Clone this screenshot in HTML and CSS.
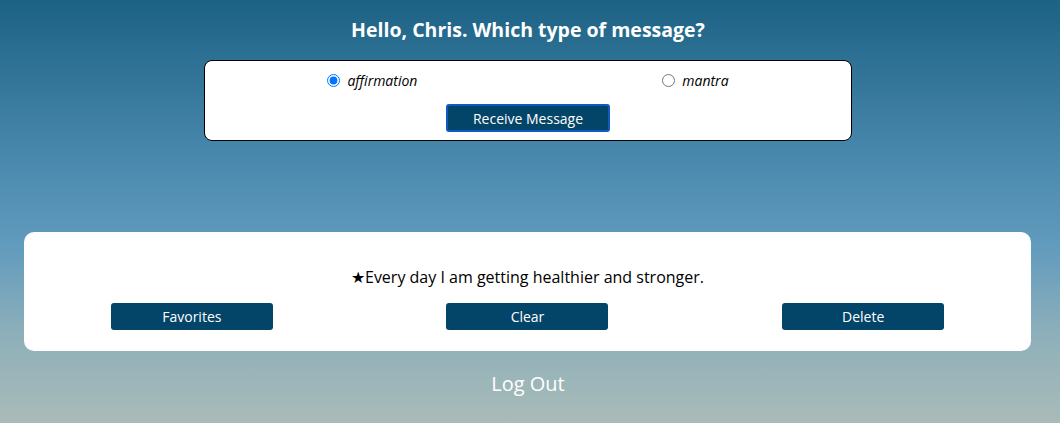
FILE: index.html
```html
<!DOCTYPE html>
<html lang="en">
<head>
<meta charset="utf-8">
<title>Messages</title>
<link rel="stylesheet" href="styles.css">
</head>
<body>
  <main class="page">
    <h2 class="greeting">Hello, Chris. Which type of message?</h2>
    <form class="choice-box">
      <div class="radio-row">
        <label class="radio-label"><input type="radio" name="type" checked> <span>affirmation</span></label>
        <label class="radio-label"><input type="radio" name="type"> <span>mantra</span></label>
      </div>
      <button type="button" class="receive-btn">Receive Message</button>
    </form>
    <section class="message-box">
      <p class="message">★Every day I am getting healthier and stronger.</p>
      <div class="actions">
        <div class="action-cell"><button type="button" class="action-btn">Favorites</button></div>
        <div class="action-cell"><button type="button" class="action-btn">Clear</button></div>
        <div class="action-cell"><button type="button" class="action-btn">Delete</button></div>
      </div>
    </section>
    <p class="logout">Log Out</p>
  </main>
</body>
</html>
```
FILE: styles.css
```css
html {
  height: 100%;
}
body {
  margin: 0;
  min-height: 100%;
  font-family: "Open Sans", "Lato", sans-serif;
  background: linear-gradient(180deg, #1c6284 0%, #4a89ae 38%, #619bbd 58%, #8fb0ba 80%, #a9bbb8 100%);
  color: #fff;
}
.page {
  display: flex;
  flex-direction: column;
  align-items: stretch;
  padding: 18px 4px 0 0;
}
.greeting {
  margin: 0 0 18px;
  font-size: 19.5px;
  line-height: 24px;
  font-weight: 700;
  text-align: center;
}
.choice-box {
  align-self: center;
  width: 648px;
  box-sizing: border-box;
  background: #fff;
  border: 1px solid #000;
  border-radius: 8px;
  padding: 11px 0 8px;
  display: flex;
  flex-direction: column;
  align-items: center;
  color: #000;
}
.radio-row {
  width: 100%;
  display: flex;
  justify-content: space-around;
  box-sizing: border-box;
}
.radio-label {
  font-size: 14px;
  line-height: 17px;
  font-style: italic;
  display: flex;
  align-items: center;
  gap: 7px;
}
.radio-label input {
  margin: 0;
  width: 13px;
  height: 13px;
}
.receive-btn {
  margin-top: 15px;
  width: 164px;
  height: 28px;
  background: #034568;
  color: #fff;
  border: 2px solid #1258c4;
  border-radius: 3px;
  font-family: inherit;
  font-size: 14px;
}
.message-box {
  margin: 91px 25px 0 24px;
  background: #fff;
  border-radius: 10px;
  padding: 35px 0 21px;
  color: #000;
}
.message {
  margin: 0;
  font-size: 16px;
  line-height: 20px;
  text-align: center;
}
.actions {
  margin-top: 16px;
  display: grid;
  grid-template-columns: 1fr 1fr 1fr;
}
.action-cell {
  display: flex;
  justify-content: center;
}
.action-btn {
  width: 162px;
  height: 27px;
  background: #034568;
  color: #fff;
  border: none;
  border-radius: 3px;
  font-family: inherit;
  font-size: 14px;
}
.logout {
  margin: 21px 0 0;
  font-size: 20px;
  line-height: 24px;
  text-align: center;
}
```
